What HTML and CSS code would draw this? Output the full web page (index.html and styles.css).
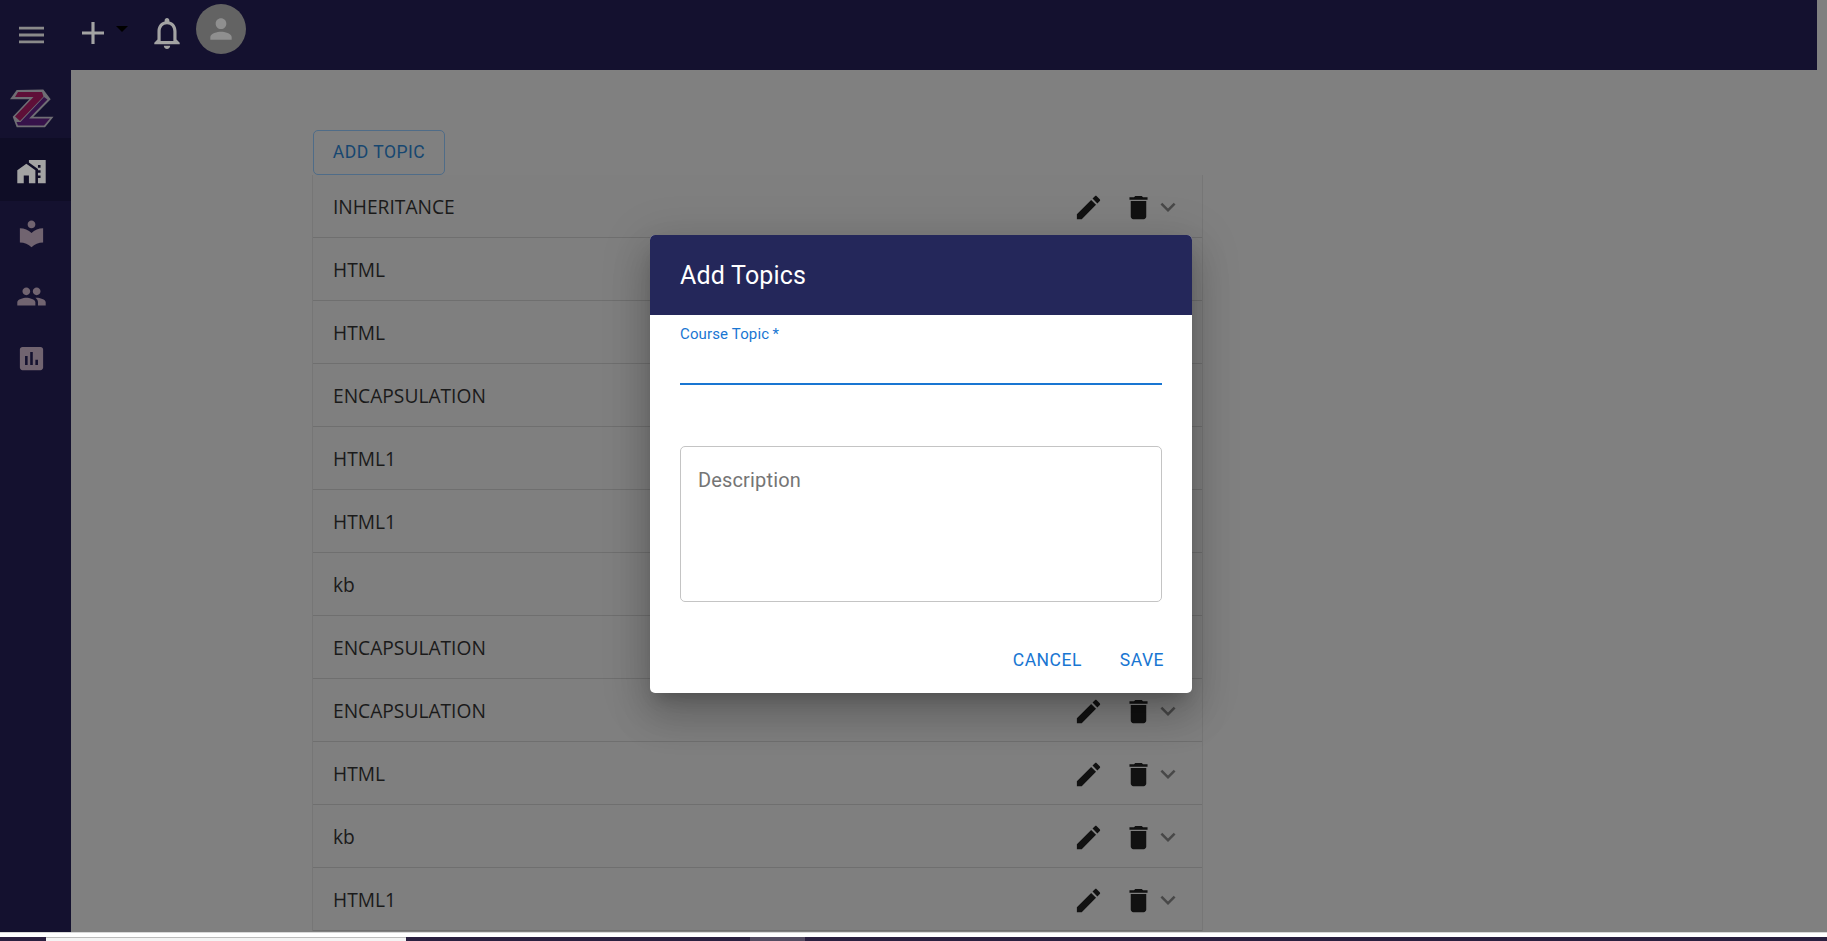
FILE: index.html
```html
<!DOCTYPE html>
<html lang="en">
<head>
    <meta charset="UTF-8">
    <meta name="viewport" content="width=device-width, initial-scale=1.0">
    <title>Course Topics</title>
    <link rel="stylesheet" href="styles.css">
</head>
<body>
    <div class="page">
        <header class="topbar">
            <svg class="menu-icon" viewBox="3 6 18 12"><path d="M3 18h18v-2H3v2zm0-5h18v-2H3v2zm0-7v2h18V6H3z"/></svg>
            <svg class="add-icon" viewBox="5 5 14 14"><path d="M19 13h-6v6h-2v-6H5v-2h6V5h2v6h6v2z"/></svg>
            <span class="add-caret"></span>
            <svg class="bell-icon" viewBox="4 2.5 16 19.5"><path d="M12 22c1.1 0 2-.9 2-2h-4c0 1.1.9 2 2 2zm6-6v-5c0-3.07-1.63-5.64-4.5-6.32V4c0-.83-.67-1.5-1.5-1.5s-1.5.67-1.5 1.5v.68C7.64 5.36 6 7.92 6 11v5l-2 2v1h16v-1l-2-2zm-2 1H8v-6c0-2.48 1.51-4.5 4-4.5s4 2.02 4 4.5v6z"/></svg>
            <div class="avatar">
                <svg viewBox="0 0 24 24"><path d="M12 12c2.21 0 4-1.79 4-4s-1.79-4-4-4-4 1.79-4 4 1.79 4 4 4zm0 2c-2.67 0-8 1.34-8 4v2h16v-2c0-2.66-5.33-4-8-4z"/></svg>
            </div>
        </header>

        <div class="body-row">
            <nav class="sidebar">
                <div class="logo">
                    <svg viewBox="0 0 44 40">
                        <polygon class="logo-edge" points="6.7,1 33.3,0.5 40.7,10.3 23.3,27.7 43.5,27.7 35,38.3 6.7,38.3 2.7,27.7 19.3,10.3 0,10.3"/>
                        <polygon class="logo-red" points="8,3 32,3 33.5,7.5 10,32 5,27.5 23.5,8 5,8"/>
                        <polygon class="logo-purple" points="34,8 37.5,10.5 19,29.5 40,29.5 34,36.5 8,36.5 6.5,33 10.5,33"/>
                    </svg>
                </div>
                <a class="nav-item active">
                    <svg viewBox="0 0 24 24"><path d="M1 11v10h5v-6h4v6h5V11L8 6zM10 3v1.97l7 5V11h2v2h-2v2h2v2h-2v4h6V3H10zm9 6h-2V7h2v2z"/></svg>
                </a>
                <a class="nav-item">
                    <svg viewBox="0 0 24 24"><path d="M12 11.55C9.64 9.35 6.48 8 3 8v11c3.48 0 6.64 1.35 9 3.55 2.36-2.19 5.52-3.55 9-3.55V8c-3.48 0-6.64 1.35-9 3.55zM12 8c1.66 0 3-1.34 3-3s-1.34-3-3-3-3 1.34-3 3 1.34 3 3 3z"/></svg>
                </a>
                <a class="nav-item">
                    <svg viewBox="0 0 24 24"><path d="M16 11c1.66 0 2.99-1.34 2.99-3S17.66 5 16 5c-1.66 0-3 1.34-3 3s1.34 3 3 3zm-8 0c1.66 0 2.99-1.34 2.99-3S9.66 5 8 5C6.34 5 5 6.34 5 8s1.34 3 3 3zm0 2c-2.33 0-7 1.17-7 3.5V19h14v-2.5c0-2.33-4.67-3.5-7-3.5zm8 0c-.29 0-.62.02-.97.05 1.16.84 1.97 1.97 1.97 3.45V19h6v-2.5c0-2.33-4.67-3.5-7-3.5z"/></svg>
                </a>
                <a class="nav-item">
                    <svg viewBox="0 0 24 24"><path d="M19 3H5c-1.1 0-2 .9-2 2v14c0 1.1.9 2 2 2h14c1.1 0 2-.9 2-2V5c0-1.1-.9-2-2-2zM9 17H7v-7h2v7zm4 0h-2V7h2v10zm4 0h-2v-4h2v4z"/></svg>
                </a>
            </nav>

            <main class="content">
                <button class="add-topic">Add Topic</button>
                <div class="topic-list" id="topic-list"></div>
            </main>
        </div>

        <!-- Dialog -->
        <div class="dialog">
            <h2 class="dialog-title">Add Topics</h2>
            <div class="dialog-body">
                <label class="field-label">Course Topic&thinsp;*</label>
                <div class="field-line"></div>
                <div class="description">Description</div>
            </div>
            <div class="dialog-actions">
                <button>Cancel</button>
                <button>Save</button>
            </div>
        </div>
    </div>

    <div class="bottom-strip">
        <div class="strip-gap"></div>
        <div class="strip-bar">
            <span class="strip-thumb"></span>
            <span class="strip-patch"></span>
        </div>
    </div>

    <script>
        const topics = ['INHERITANCE', 'HTML', 'HTML', 'ENCAPSULATION', 'HTML1', 'HTML1', 'kb',
            'ENCAPSULATION', 'ENCAPSULATION', 'HTML', 'kb', 'HTML1'];

        const editPath = 'M3 17.25V21h3.75L17.81 9.94l-3.75-3.75L3 17.25zM20.71 7.04c.39-.39.39-1.02 0-1.41l-2.34-2.34c-.39-.39-1.02-.39-1.41 0l-1.83 1.83 3.75 3.75 1.83-1.83z';
        const deletePath = 'M6 19c0 1.1.9 2 2 2h8c1.1 0 2-.9 2-2V7H6v12zM19 4h-3.5l-1-1h-5l-1 1H5v2h14V4z';
        const chevronPath = 'M16.59 8.59 12 13.17 7.41 8.59 6 10l6 6 6-6z';

        document.getElementById('topic-list').innerHTML = topics.map(name => `
            <div class="topic-row">
                <span class="topic-name">${name}</span>
                <svg class="row-icon edit" viewBox="0 0 24 24"><path d="${editPath}"/></svg>
                <svg class="row-icon delete" viewBox="0 0 24 24"><path d="${deletePath}"/></svg>
                <svg class="row-icon chevron" viewBox="0 0 24 24"><path d="${chevronPath}"/></svg>
            </div>`).join('');
    </script>
</body>
</html>
```

FILE: styles.css
```css
* {
    margin: 0;
    padding: 0;
    box-sizing: border-box;
}

body {
    font-family: 'Roboto', sans-serif;
    background: #fff;
    height: 941px;
    overflow: hidden;
}

.page {
    height: 932px;
    background: #808080;
    position: relative;
    overflow: hidden;
    display: flex;
    flex-direction: column;
}

.topbar {
    width: 1817px;
    height: 70px;
    flex: none;
    background: #14112f;
    display: flex;
    align-items: flex-start;
    padding-left: 19px;
}

.topbar svg {
    fill: #a3a3a3;
    display: block;
}

.topbar .menu-icon {
    width: 25px;
    height: 18px;
    margin-top: 26px;
    fill: #8a8a8a;
}

.add-icon {
    width: 22px;
    height: 22px;
    margin: 22px 0 0 38px;
}

.add-caret {
    width: 0;
    height: 0;
    margin: 26px 0 0 12px;
    border-left: 6px solid transparent;
    border-right: 6px solid transparent;
    border-top: 6px solid #000;
}

.bell-icon {
    width: 26px;
    height: 31px;
    margin: 18px 0 0 26px;
}

.avatar {
    width: 50px;
    height: 50px;
    margin: 4px 0 0 16px;
    border-radius: 50%;
    background: #636363;
    display: flex;
    align-items: center;
    justify-content: center;
}

.topbar .avatar svg {
    width: 32px;
    height: 32px;
    fill: #8f8f8f;
}

.body-row {
    flex: 1;
    display: flex;
    min-height: 0;
}

.sidebar {
    width: 71px;
    flex: none;
    background: #14112f;
    display: flex;
    flex-direction: column;
}

.logo {
    height: 68px;
    padding: 19px 0 0 10px;
}

.logo svg {
    width: 44px;
    height: 40px;
    display: block;
}

.logo-edge {
    fill: #6f6e74;
}

.logo-red {
    fill: #5f0f38;
}

.logo-purple {
    fill: #36124a;
}

.nav-item {
    height: 62.5px;
    padding: 4px 0 0 16px;
    display: flex;
    align-items: center;
}

.nav-item svg {
    width: 31px;
    height: 31px;
    fill: #716470;
}

.nav-item.active {
    background: #0f0d26;
}

.nav-item.active svg {
    fill: #a3a3a3;
}

.content {
    flex: 1;
    padding: 60px 0 0 241px;
    min-width: 0;
}

.add-topic {
    display: block;
    width: 132px;
    height: 45px;
    margin-left: 1px;
    padding-bottom: 2px;
    background: transparent;
    border: 1px solid #4f6c88;
    border-radius: 5px;
    color: #174770;
    font-family: inherit;
    font-size: 17.5px;
    letter-spacing: 0.5px;
    text-transform: uppercase;
}

.topic-list {
    width: 891px;
    border-left: 1px solid #767676;
    border-right: 1px solid #767676;
}

.topic-row {
    height: 63px;
    display: flex;
    align-items: center;
    padding: 0 19px 0 20px;
    border-bottom: 1px solid #6f6f6f;
    color: #1a1a1a;
    background: #7f7f7f;
}

.topic-name {
    flex: 1;
    font-family: 'Open Sans', sans-serif;
    font-size: 19.2px;
}

.row-icon {
    width: 31px;
    height: 31px;
    flex: none;
    margin-top: 2px;
    fill: #111;
}

.row-icon.delete {
    margin-left: 19px;
}

.row-icon.chevron {
    width: 30px;
    height: 30px;
    margin-left: -1px;
    fill: #484848;
}

.dialog {
    position: absolute;
    left: 650px;
    top: 235px;
    width: 542px;
    height: 458px;
    background: #fff;
    border-radius: 5px;
    overflow: hidden;
    box-shadow: 0 11px 15px -7px rgba(0, 0, 0, 0.2), 0 24px 38px 3px rgba(0, 0, 0, 0.14), 0 9px 46px 8px rgba(0, 0, 0, 0.12);
    display: flex;
    flex-direction: column;
}

.dialog-title {
    height: 80px;
    flex: none;
    background: #24275a;
    color: #fff;
    font-size: 25px;
    font-weight: 400;
    letter-spacing: 0.19px;
    line-height: 82px;
    padding-left: 30px;
}

.dialog-body {
    flex: none;
    padding: 10px 30px 0;
}

.field-label {
    display: block;
    font-size: 15px;
    letter-spacing: 0.14px;
    line-height: 18px;
    color: #1976d2;
}

.field-line {
    height: 2px;
    margin-top: 40px;
    background: #1976d2;
}

.description {
    height: 156px;
    margin-top: 61px;
    padding: 21px 17px;
    border: 1px solid #c4c4c4;
    border-radius: 5px;
    color: #757575;
    font-size: 20px;
    letter-spacing: 0.15px;
    line-height: 24px;
}

.dialog-actions {
    flex: 1;
    display: flex;
    justify-content: flex-end;
    padding: 46px 28px 0 0;
    gap: 38px;
}

.dialog-actions button {
    background: none;
    border: none;
    color: #1976d2;
    font-family: inherit;
    font-size: 17.5px;
    letter-spacing: 0.5px;
    text-transform: uppercase;
    height: 24px;
}

.bottom-strip {
    height: 9px;
}

.strip-gap {
    height: 5px;
    background: #fff;
    border-top: 1px solid #d8d8d8;
}

.strip-bar {
    height: 4px;
    background: #2a2040;
    display: flex;
}

.strip-thumb {
    width: 360px;
    margin-left: 46px;
    background: #f4f4f4;
    border-top: 1px solid #bbb;
}

.strip-patch {
    width: 55px;
    margin-left: 344px;
    background: #544c62;
}
```
